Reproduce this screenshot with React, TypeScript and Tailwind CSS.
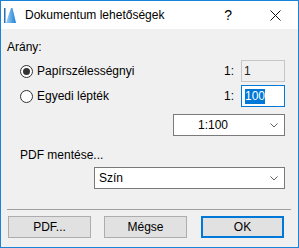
import { useState } from 'react'

function Chevron() {
  return (
    <svg width="8" height="5" viewBox="0 0 8 5" className="text-[#606060]">
      <path d="M0.5 0.5 L4 4 L7.5 0.5" fill="none" stroke="currentColor" strokeWidth="1" />
    </svg>
  )
}

function Radio({ checked }: { checked: boolean }) {
  return (
    <span className="flex h-[13px] w-[13px] items-center justify-center rounded-full border border-[#333] bg-white">
      {checked && <span className="h-[7px] w-[7px] rounded-full bg-[#333]" />}
    </span>
  )
}

function AppIcon() {
  return (
    <svg width="12" height="15" viewBox="0 0 12 15">
      <defs>
        <linearGradient id="sail" x1="0" y1="0" x2="1" y2="0">
          <stop offset="0" stopColor="#9fd3f5" />
          <stop offset="1" stopColor="#1f7fd6" />
        </linearGradient>
      </defs>
      <rect x="0" y="0" width="1.5" height="15" fill="#2a6fb8" />
      <path d="M2 15 L7 0 L8.5 0 L12 15 Z" fill="url(#sail)" />
    </svg>
  )
}

export default function App() {
  const [scale] = useState('1:100')

  return (
    <div
      className="flex h-[248px] w-[299px] flex-col border border-[#1883d7] bg-[#f0f0f0] text-[12px] text-black"
      style={{ fontFamily: '"Segoe UI", "Liberation Sans", Arial, sans-serif' }}
    >
      {/* Title bar */}
      <div className="flex h-[28px] items-center bg-white pl-[3px]">
        <AppIcon />
        <span className="ml-[9px] text-[12px]">Dokumentum lehetőségek</span>
        <span className="ml-auto mr-[38px] text-[14px]">?</span>
        <svg width="11" height="11" viewBox="0 0 11 11" className="mr-[17px]">
          <path d="M0.5 0.5 L10.5 10.5 M10.5 0.5 L0.5 10.5" stroke="#111" strokeWidth="1" />
        </svg>
      </div>

      {/* Body */}
      <div className="flex flex-1 flex-col pl-[6px] pr-[13px]">
        <div className="mt-[10px] h-[16px] leading-[16px]">Arány:</div>

        <div className="mt-[5px] flex h-[22px] items-center">
          <div className="ml-[13px] flex items-center gap-[4px]">
            <Radio checked />
            <span>Papírszélességnyi</span>
          </div>
          <span className="ml-auto mr-[7px]">1:</span>
          <div className="flex h-[22px] w-[44px] items-center border border-[#c6c6c6] bg-[#f0f0f0] pl-[2px] text-[#222]">
            1
          </div>
        </div>

        <div className="mt-[3px] flex h-[22px] items-center">
          <div className="ml-[13px] flex items-center gap-[4px]">
            <Radio checked={false} />
            <span>Egyedi lépték</span>
          </div>
          <span className="ml-auto mr-[7px]">1:</span>
          <div className="flex h-[22px] w-[44px] items-center border border-[#0078d7] bg-white pl-[3px]">
            <span className="bg-[#0078d7] leading-[15px] text-white">100</span>
          </div>
        </div>

        <div className="mt-[7px] flex justify-end">
          <div className="flex h-[22px] w-[112px] items-center border border-[#7a7a7a] bg-white pl-[24px] pr-[6px]">
            <span>{scale}</span>
            <span className="ml-auto flex">
              <Chevron />
            </span>
          </div>
        </div>

        <div className="ml-[13px] mt-[11px] h-[16px] leading-[16px]">PDF mentése...</div>

        <div className="mt-[4px] flex justify-end">
          <div className="flex h-[22px] w-[191px] items-center border border-[#7a7a7a] bg-white pl-[4px] pr-[6px]">
            <span>Szín</span>
            <span className="ml-auto flex">
              <Chevron />
            </span>
          </div>
        </div>

        <div className="mt-[20px] h-px w-[284px] bg-[#a0a0a0]" />

        <div className="mt-[6px] flex gap-[13px] pl-[1px]">
          <button className="h-[22px] w-[83px] border border-[#adadad] bg-[#e1e1e1]">PDF...</button>
          <button className="h-[22px] w-[83px] border border-[#adadad] bg-[#e1e1e1]">Mégse</button>
          <button className="ml-[1px] h-[22px] w-[83px] border-2 border-[#0078d7] bg-[#e1e1e1]">OK</button>
        </div>
      </div>
    </div>
  )
}
